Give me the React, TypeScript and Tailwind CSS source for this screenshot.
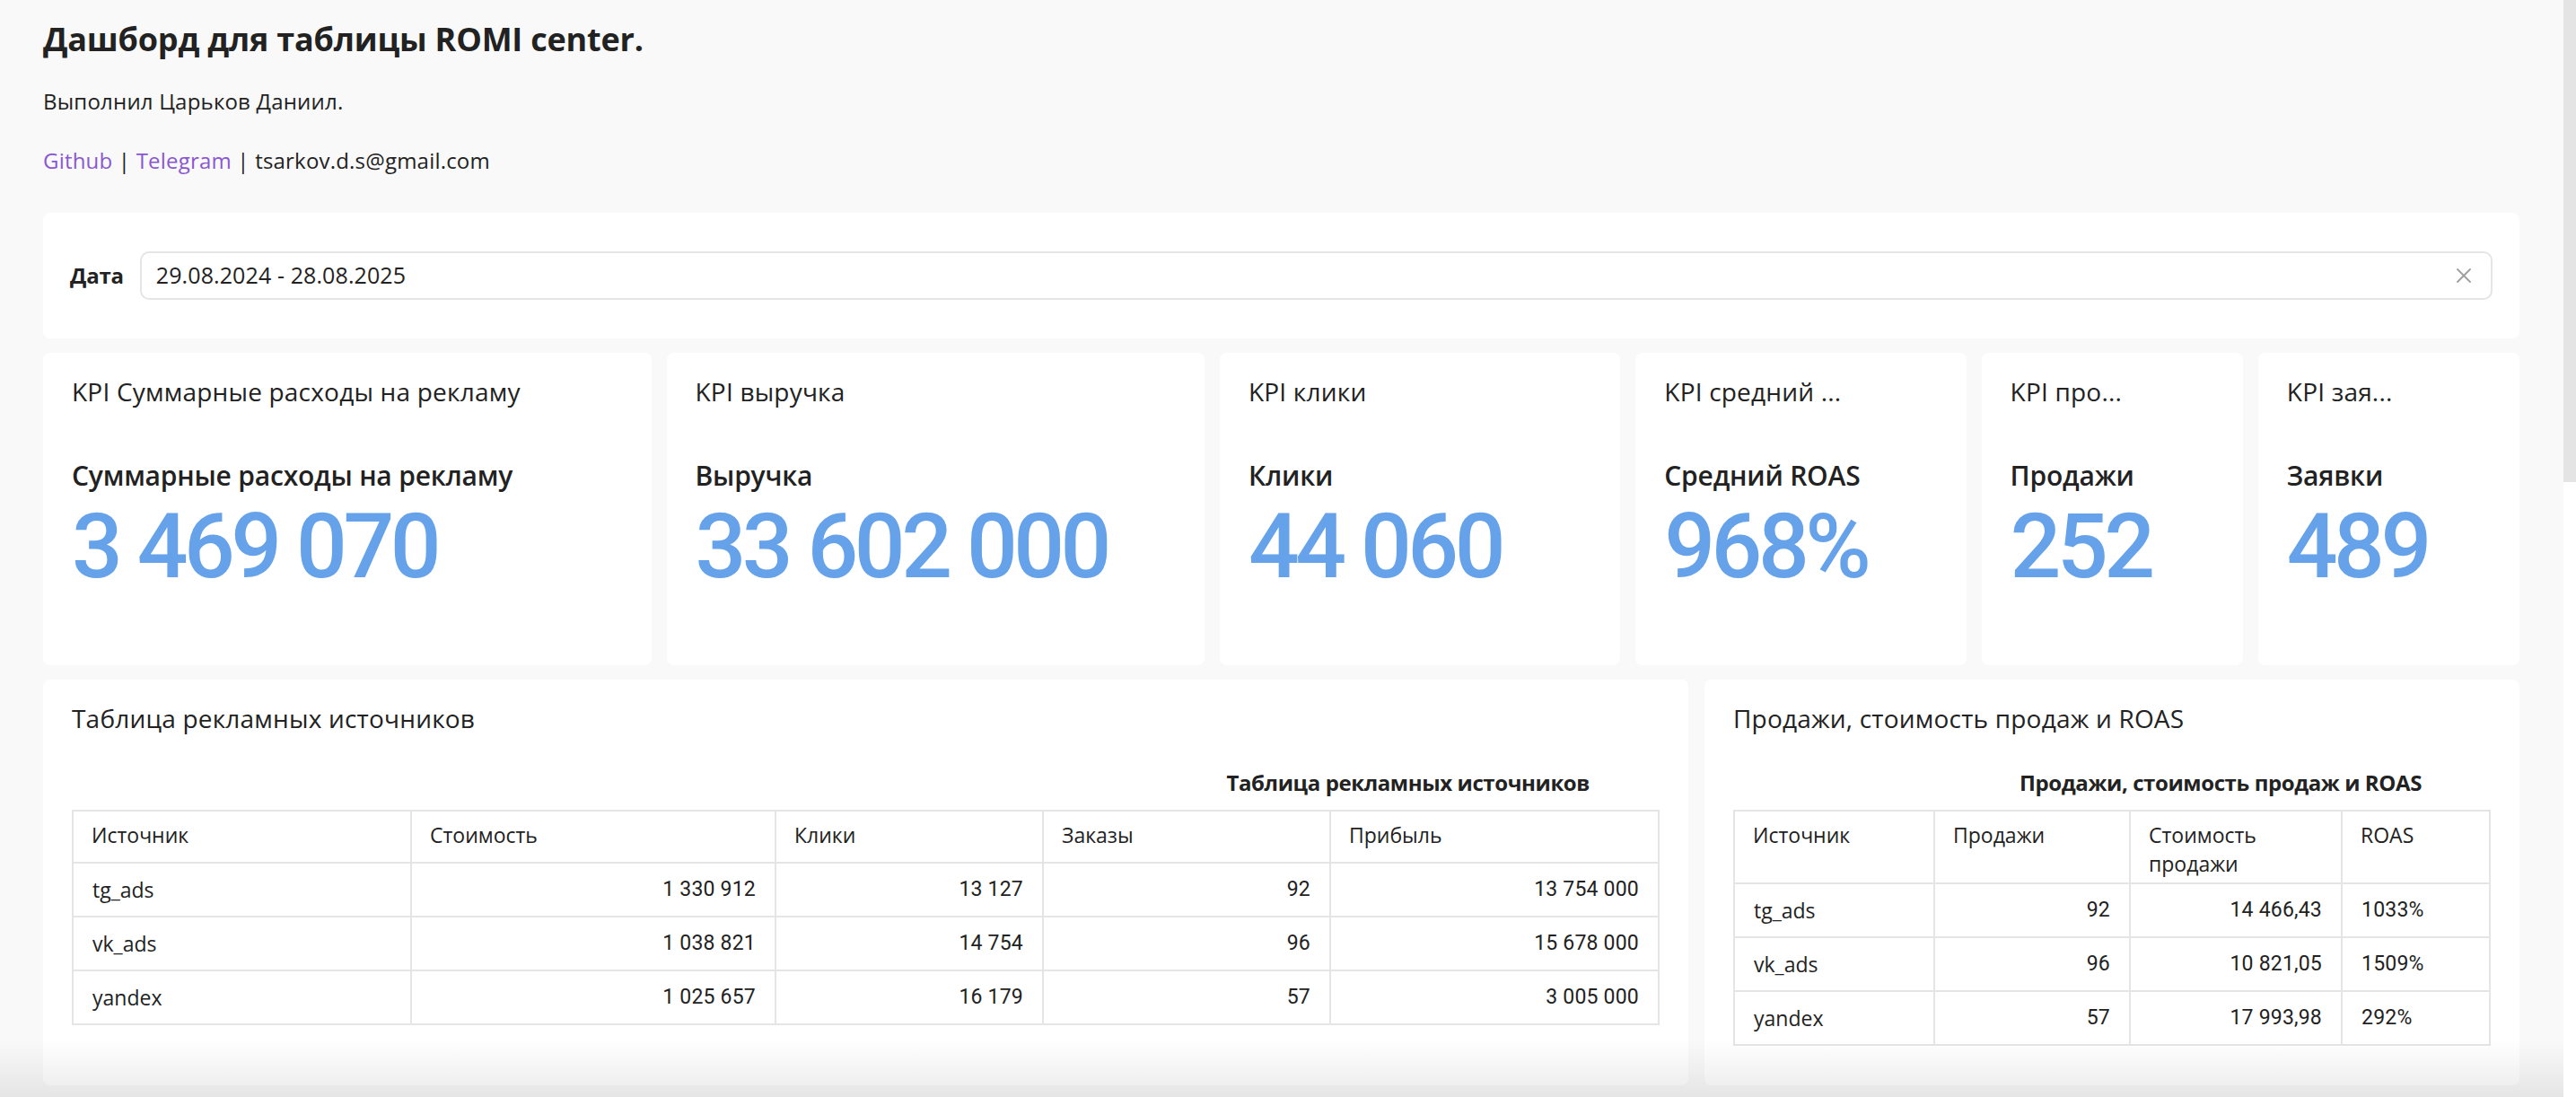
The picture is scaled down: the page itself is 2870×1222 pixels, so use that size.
import { X } from 'lucide-react';

const kpis = [
    { title: 'KPI Суммарные расходы на рекламу', label: 'Суммарные расходы на рекламу', value: '3 469 070' },
    { title: 'KPI выручка', label: 'Выручка', value: '33 602 000' },
    { title: 'KPI клики', label: 'Клики', value: '44 060' },
    { title: 'KPI средний ...', label: 'Средний ROAS', value: '968%' },
    { title: 'KPI про...', label: 'Продажи', value: '252' },
    { title: 'KPI зая...', label: 'Заявки', value: '489' },
];

const sources = [
    { name: 'tg_ads', cost: '1 330 912', clicks: '13 127', orders: '92', profit: '13 754 000' },
    { name: 'vk_ads', cost: '1 038 821', clicks: '14 754', orders: '96', profit: '15 678 000' },
    { name: 'yandex', cost: '1 025 657', clicks: '16 179', orders: '57', profit: '3 005 000' },
];

const roas = [
    { name: 'tg_ads', sales: '92', cost: '14 466,43', roas: '1033%' },
    { name: 'vk_ads', sales: '96', cost: '10 821,05', roas: '1509%' },
    { name: 'yandex', sales: '57', cost: '17 993,98', roas: '292%' },
];

// text in Open Sans, numbers in Roboto (narrower digits)
const th = 'border-2 border-[#e5e5e5] px-[20px] pt-[10px] align-top text-left font-medium';
const td = 'border-2 border-[#e5e5e5] px-[21px] align-middle';
const numBase = 'border-2 border-[#e5e5e5] px-[21px] align-middle font-[Roboto,sans-serif] tracking-[0.2px]';
const num = `${numBase} text-right`;
const numLeft = `${numBase} text-left`;

function KpiCard({ title, label, value }: { title: string; label: string; value: string }) {
    return (
        <div className="h-[348px] rounded-[8px] bg-white pl-[32px] pr-[20px] pt-[25px] overflow-hidden">
            <div className="text-[28px] leading-[36px] text-[#222] whitespace-nowrap tracking-[0.2px]">{title}</div>
            <div className="mt-[57px] text-[30px] leading-[38px] font-semibold text-[#222] whitespace-nowrap tracking-[-0.2px]">{label}</div>
            <div className="mt-[10px] font-[Roboto,sans-serif] text-[100px] leading-[100px] font-medium text-[#65a2ea] tracking-[-4.5px] whitespace-nowrap">
                {value}
            </div>
        </div>
    );
}

export default function App() {
    return (
        <div className="relative flex h-[1222px] w-full overflow-hidden bg-[#f9f9f9] font-['Open_Sans','Noto_Sans',sans-serif] text-[#222]">
            <div className="flex-1 pl-[48px] pr-[49px]">
                {/* header */}
                <h1 className="pt-[22px] text-[36px] leading-[44px] font-bold tracking-[-0.2px]">
                    Дашборд для таблицы ROMI center.
                </h1>
                <p className="mt-[31px] text-[24px] leading-[32px] tracking-[0.2px]">Выполнил Царьков Даниил.</p>
                <p className="mt-[34px] text-[24px] leading-[32px] tracking-[0.2px]">
                    <a className="text-[#8a57d2]" href="#">Github</a>
                    {' | '}
                    <a className="text-[#8a57d2]" href="#">Telegram</a>
                    {' | tsarkov.d.s@gmail.com'}
                </p>

                {/* date filter */}
                <div className="mt-[42px] flex h-[140px] items-center gap-[18px] rounded-[8px] bg-white pl-[30px] pr-[30px]">
                    <span className="text-[24px] font-bold tracking-[-0.2px]">Дата</span>
                    <div className="flex h-[54px] flex-1 items-center justify-between rounded-[10px] border-2 border-[#e5e5e5] pl-[16px] pr-[16px]">
                        <span className="text-[25px] tracking-[0.1px]">29.08.2024 - 28.08.2025</span>
                        <X className="h-[28px] w-[28px] text-[#a0a0a0]" strokeWidth={1.6} />
                    </div>
                </div>

                {/* KPI row */}
                <div className="mt-[16px] grid grid-cols-[677fr_599fr_446fr_368fr_291fr_291fr] gap-[17px]">
                    {kpis.map((k) => (
                        <KpiCard key={k.title} {...k} />
                    ))}
                </div>

                {/* tables */}
                <div className="mt-[16px] grid grid-cols-[1833fr_908fr] gap-[18px]">
                    <div className="h-[452px] rounded-[8px] bg-white px-[32px] pt-[25px]">
                        <div className="text-[28px] leading-[36px] tracking-[0.2px]">Таблица рекламных источников</div>
                        <div className="mt-[39px] flex justify-end pr-[78px] text-[24px] leading-[30px] font-bold tracking-[-0.4px]">
                            Таблица рекламных источников
                        </div>
                        <table className="mt-[15px] w-full table-fixed border-collapse text-[23px] leading-[32px]">
                            <colgroup>
                                <col className="w-[377px]" />
                                <col className="w-[406px]" />
                                <col className="w-[298px]" />
                                <col className="w-[320px]" />
                                <col />
                            </colgroup>
                            <thead>
                                <tr className="h-[58px]">
                                    <th className={th}>Источник</th>
                                    <th className={th}>Стоимость</th>
                                    <th className={th}>Клики</th>
                                    <th className={th}>Заказы</th>
                                    <th className={th}>Прибыль</th>
                                </tr>
                            </thead>
                            <tbody>
                                {sources.map((r) => (
                                    <tr key={r.name} className="h-[60px]">
                                        <td className={td}>{r.name}</td>
                                        <td className={num}>{r.cost}</td>
                                        <td className={num}>{r.clicks}</td>
                                        <td className={num}>{r.orders}</td>
                                        <td className={num}>{r.profit}</td>
                                    </tr>
                                ))}
                            </tbody>
                        </table>
                    </div>

                    <div className="h-[452px] rounded-[8px] bg-white px-[32px] pt-[25px]">
                        <div className="text-[28px] leading-[36px] tracking-[0.2px]">Продажи, стоимость продаж и ROAS</div>
                        <div className="mt-[39px] flex justify-end pr-[77px] text-[24px] leading-[30px] font-bold tracking-[-0.4px]">
                            Продажи, стоимость продаж и ROAS
                        </div>
                        <table className="mt-[15px] w-full table-fixed border-collapse text-[23px] leading-[32px]">
                            <colgroup>
                                <col className="w-[223px]" />
                                <col className="w-[218px]" />
                                <col className="w-[236px]" />
                                <col />
                            </colgroup>
                            <thead>
                                <tr className="h-[81px]">
                                    <th className={th}>Источник</th>
                                    <th className={th}>Продажи</th>
                                    <th className={th}>
                                        Стоимость
                                        <br />
                                        продажи
                                    </th>
                                    <th className={th}>ROAS</th>
                                </tr>
                            </thead>
                            <tbody>
                                {roas.map((r) => (
                                    <tr key={r.name} className="h-[60px]">
                                        <td className={td}>{r.name}</td>
                                        <td className={num}>{r.sales}</td>
                                        <td className={num}>{r.cost}</td>
                                        <td className={numLeft}>{r.roas}</td>
                                    </tr>
                                ))}
                            </tbody>
                        </table>
                    </div>
                </div>
            </div>

            {/* scrollbar */}
            <div className="flex w-[14px] flex-col bg-white">
                <div className="h-[537px] bg-[#e4e4e4]" />
            </div>

            {/* bottom fade */}
            <div className="pointer-events-none absolute bottom-0 left-0 right-[14px] h-[64px] bg-linear-to-b from-transparent to-black/[0.08]" />
        </div>
    );
}
